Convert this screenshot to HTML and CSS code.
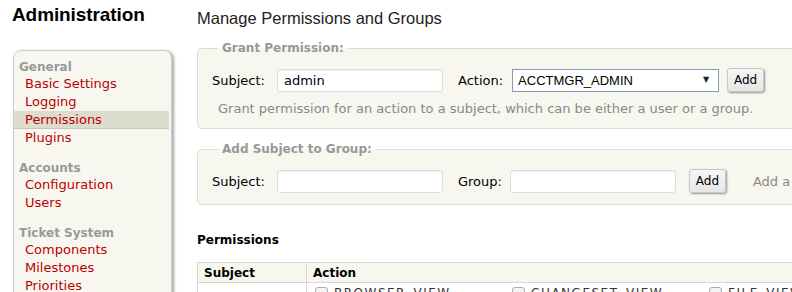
FILE: index.html
```html
<!DOCTYPE html>
<html lang="en">
  <head>
    <meta charset="UTF-8" />
    <title>Administration</title>
    <link rel="stylesheet" href="styles.css">
  </head>
  <body>
    <div class="page">
      <div class="side">
        <h1>Administration</h1>
        <div class="nav">
          <div class="group">
            <div class="group-title">General</div>
            <a href="#">Basic Settings</a>
            <a href="#">Logging</a>
            <a href="#" class="active">Permissions</a>
            <a href="#">Plugins</a>
          </div>
          <div class="group">
            <div class="group-title">Accounts</div>
            <a href="#">Configuration</a>
            <a href="#">Users</a>
          </div>
          <div class="group">
            <div class="group-title">Ticket System</div>
            <a href="#">Components</a>
            <a href="#">Milestones</a>
            <a href="#">Priorities</a>
          </div>
        </div>
      </div>

      <div class="main">
        <h2>Manage Permissions and Groups</h2>

        <fieldset class="box">
          <legend>Grant Permission:</legend>
          <div class="row">
            <label>Subject:</label>
            <input type="text" class="field" value="admin" />
            <label class="second">Action:</label>
            <div class="select-wrap">
              <select>
                <option>ACCTMGR_ADMIN</option>
              </select>
            </div>
            <button>Add</button>
          </div>
          <p class="hint">Grant permission for an action to a subject, which can be either a user or a group.</p>
        </fieldset>

        <fieldset class="box box-group">
          <legend>Add Subject to Group:</legend>
          <div class="row">
            <label>Subject:</label>
            <input type="text" class="field" />
            <label class="second group-label">Group:</label>
            <input type="text" class="field" />
            <button class="add-group">Add</button>
            <span class="hint-inline">Add a</span>
          </div>
        </fieldset>

        <h3>Permissions</h3>
        <table class="perms">
          <colgroup>
            <col class="col-subject" />
            <col />
          </colgroup>
          <thead>
            <tr>
              <th>Subject</th>
              <th>Action</th>
            </tr>
          </thead>
          <tbody>
            <tr>
              <td></td>
              <td>
                <div class="actions">
                  <span class="act"><span class="check"></span>BROWSER_VIEW</span>
                  <span class="act"><span class="check"></span>CHANGESET_VIEW</span>
                  <span class="act"><span class="check"></span>FILE_VIEW</span>
                </div>
              </td>
            </tr>
          </tbody>
        </table>
      </div>
    </div>
  </body>
</html>
```

FILE: styles.css
```css
html,
body {
  margin: 0;
  padding: 0;
  height: 292px;
  overflow: hidden;
}
body {
  font-family: "DejaVu Sans", Verdana, sans-serif;
  font-size: 13px;
  color: #000;
  background: #fff;
}
.page {
  display: flex;
  width: 1000px;
}
.side {
  width: 172px;
  flex: none;
  padding-left: 12px;
  box-sizing: border-box;
}
h1 {
  font-family: "Liberation Sans", Arial, sans-serif;
  font-size: 19px;
  font-weight: bold;
  line-height: 22px;
  margin: 4px 0 0;
  letter-spacing: -0.1px;
}
.nav {
  margin: 24px 0 0 1px;
  background: #f7f7f0;
  border: 1px solid #d0d0c8;
  border-radius: 8px;
  box-shadow: 2px 1px 3px rgba(0, 0, 0, 0.35);
  padding: 9px 0 10px;
  height: 400px;
}
.group {
  margin-bottom: 14px;
}
.group-title {
  color: #999;
  font-weight: bold;
  font-size: 12px;
  line-height: 15px;
  padding-left: 5px;
}
.nav a {
  display: block;
  color: #b00;
  text-decoration: none;
  line-height: 18px;
  padding-left: 11px;
}
.nav a.active {
  background: #dcdccf;
  border-bottom: 1px solid #c8c8b8;
  margin-right: 2px;
  line-height: 17px;
}

.main {
  margin-left: 25px;
  width: 800px;
}
h2 {
  font-family: "Liberation Sans", Arial, sans-serif;
  font-size: 16.5px;
  font-weight: normal;
  color: #222;
  line-height: 20px;
  margin: 8px 0 13px;
}
.box {
  background: #f7f7f0;
  border: 1px solid #dcdcd4;
  border-radius: 5px;
  margin: 0 0 13px;
  padding: 13px 14px 10px;
  width: 640px;
  box-sizing: border-box;
}
.box legend {
  color: #999;
  font-weight: bold;
  font-size: 12px;
  line-height: 14px;
  padding: 0 4px;
  margin-left: 6px;
}
.row {
  display: flex;
  align-items: center;
  white-space: nowrap;
}
.row label {
  margin-right: 12px;
}
.row label.second {
  margin-left: 15px;
  margin-right: 9px;
}
.row label.group-label {
  margin-right: 8px;
}
.field {
  width: 166px;
  height: 23px;
  box-sizing: border-box;
  border: 1px solid #ddd;
  border-radius: 3px;
  background: #fff;
  font-family: "DejaVu Sans", Verdana, sans-serif;
  font-size: 13px;
  padding: 0 6px;
  box-shadow: inset 0 1px 1px rgba(0, 0, 0, 0.05);
}
.select-wrap {
  position: relative;
}
.select-wrap select {
  appearance: none;
  -webkit-appearance: none;
  width: 207px;
  height: 23px;
  border: 1px solid #7f9db9;
  background: #fff;
  font-family: "Liberation Sans", Arial, sans-serif;
  font-size: 13px;
  padding: 0 5px;
  border-radius: 0;
}
.select-wrap::after {
  content: "▼";
  position: absolute;
  right: 10px;
  top: 6px;
  font-size: 8px;
  color: #222;
  pointer-events: none;
}
button {
  margin-left: 8px;
  width: 37px;
  height: 24px;
  font-family: "DejaVu Sans", Verdana, sans-serif;
  font-size: 12px;
  color: #000;
  background: linear-gradient(#f6f6f6, #e6e6e6);
  border: 1px solid #c8c8c8;
  border-radius: 3px;
  box-shadow: 1px 1px 2px rgba(0, 0, 0, 0.4);
  padding: 0;
  cursor: pointer;
}
button.add-group {
  margin-left: 13px;
}
.hint {
  color: #888;
  margin: 8px 0 0 6px;
  line-height: 18px;
}
.hint-inline {
  color: #888;
  margin-left: 27px;
}
.box-group {
  padding-top: 13px;
  padding-bottom: 11px;
}

h3 {
  font-size: 12px;
  font-weight: bold;
  line-height: 16px;
  margin: 27px 0 14px;
}
.perms {
  border-collapse: collapse;
  table-layout: fixed;
  width: 700px;
  font-size: 12px;
}
.perms col.col-subject {
  width: 109px;
}
.perms th {
  background: #f7f7f0;
  border: 1px solid #d7d7d0;
  text-align: left;
  font-weight: bold;
  padding: 3px 6px 2px;
  line-height: 14px;
  height: 14px;
}
.perms td {
  border-left: 1px solid #d7d7d0;
  padding: 3px 7px;
  vertical-align: top;
}
.actions {
  display: flex;
  padding-left: 1px;
}
.act {
  width: 197px;
  flex: none;
  display: flex;
  align-items: center;
  color: #333;
  font-size: 12px;
  letter-spacing: 1.5px;
}
.check {
  width: 11px;
  height: 11px;
  border: 1px solid #aaa;
  border-radius: 3px;
  background: #f4f4f4;
  margin-right: 6px;
}
```
